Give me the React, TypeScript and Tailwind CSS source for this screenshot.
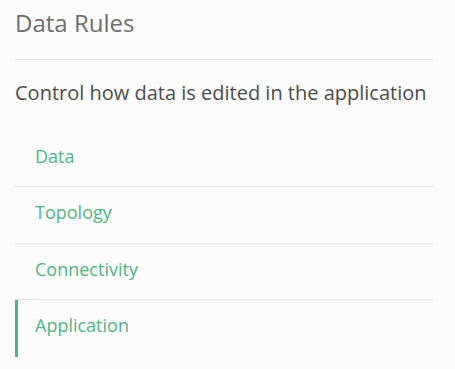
const items = ["Data", "Topology", "Connectivity", "Application"];

export default function App() {
  const active = "Application";
  return (
    <div className="min-h-[369px] w-[455px] bg-[#fcfcfd] font-['Open_Sans',sans-serif]">
      <div className="ml-[15px] w-[418px]">
        <div className="h-[60px] border-b border-[#e0e0e0] pt-[7px]">
          <h2 className="text-[24px] leading-[32px] text-[#6e6e6e]">Data Rules</h2>
        </div>
        <p className="mt-[19px] text-[20px] leading-[28px] text-[#4c4c4c]">
          Control how data is edited in the application
        </p>
        <ul className="mt-[24px]">
          {items.map((name, i) => (
            <li
              key={name}
              className={`h-[56.4px] pt-[13px] text-[18px] leading-[24px] text-[#50b584] ${
                i < items.length - 1 ? "border-b border-[#dfe1e6]" : ""
              } ${name === active ? "border-l-[3px] border-l-[#4bb683] pl-[17px]" : "pl-[20px]"}`}
            >
              {name}
            </li>
          ))}
        </ul>
      </div>
    </div>
  );
}
